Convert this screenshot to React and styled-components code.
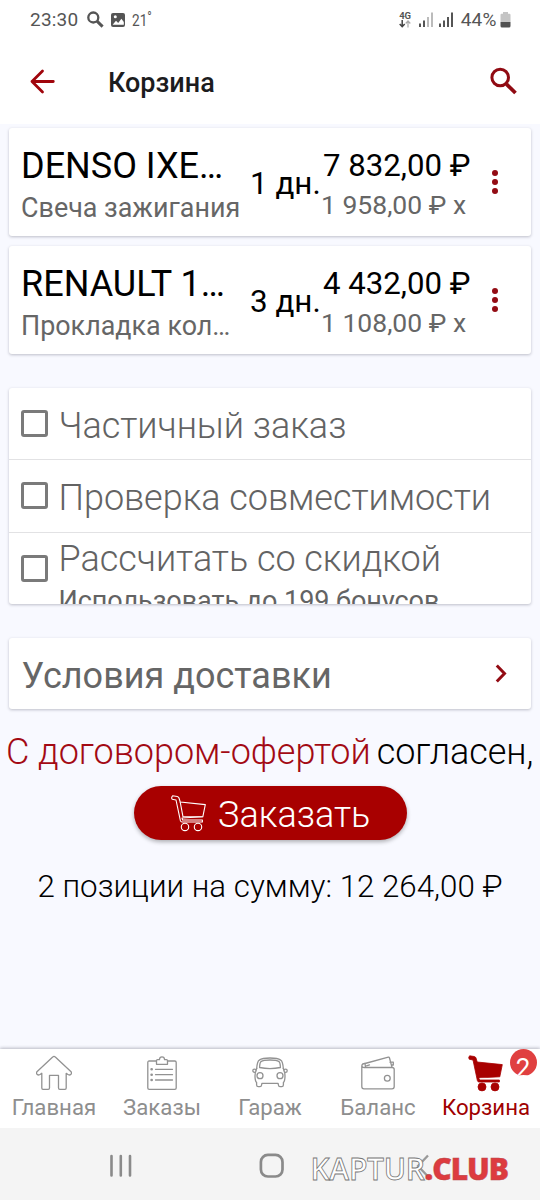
import React from 'react';
import styled, { createGlobalStyle } from 'styled-components';

const GlobalStyle = createGlobalStyle`
  * {
    box-sizing: border-box;
  }

  body {
    margin: 0;
    background: #f8f9ff;
    font-family: Roboto, 'Liberation Sans', sans-serif;
  }

  svg {
    display: block;
    flex-shrink: 0;
  }
`;

const Screen = styled.div`
  display: flex;
  flex-direction: column;
  width: 540px;
  height: 1200px;
  overflow: hidden;
  white-space: nowrap;
`;

const StatusBar = styled.div`
  display: flex;
  justify-content: space-between;
  align-items: center;
  height: 39px;
  padding: 0 29.5px 0 30px;
  background: #fff;
  color: #555;
  font-size: 19px;
`;

const StatusGroup = styled.div`
  display: flex;
  align-items: center;
`;

const Clock = styled.span`
  width: 56.5px;
  letter-spacing: 0.2px;
`;

const Temperature = styled.span`
  width: 20px;
  margin-left: 6px;
  font-size: 17px;
  transform: scaleX(0.8);
  transform-origin: left;
`;

const Degree = styled.sup`
  font-size: 15px;
  line-height: 0;
  vertical-align: 4px;
`;

const Network = styled.div`
  display: flex;
  flex-direction: column;
  align-items: center;
  width: 13px;
  margin-right: 7px;
  font-size: 9.5px;
  font-weight: 700;
  line-height: 9px;
`;

const BatteryLevel = styled.span`
  margin: 0 3px 0 7px;
  letter-spacing: 0.2px;
`;

const Header = styled.header`
  display: flex;
  align-items: center;
  height: 85px;
  padding: 0 22px 0 30px;
  background: #fff;
`;

const Title = styled.h1`
  flex: 1;
  margin: 0 0 0 53px;
  padding-top: 3px;
  color: #1c1c1e;
  font-size: 27px;
  font-weight: 500;
`;

const Content = styled.main`
  display: flex;
  flex: 1;
  flex-direction: column;
  padding: 4px 9px 0;
`;

const Card = styled.section`
  background: #fff;
  border-radius: 3px;
  box-shadow: 0 1px 3px rgba(40, 40, 60, 0.28);
`;

const CartItem = styled(Card)`
  display: flex;
  align-items: flex-start;
  height: 108px;
  margin-bottom: 10px;
  padding: 17px 0 0 12px;
`;

const ItemInfo = styled.div`
  width: 228px;
`;

const ItemName = styled.div`
  color: #000;
  font-size: 36px;
  line-height: 42px;
`;

const ItemNote = styled.div`
  color: #666;
  font-size: 26.9px;
  line-height: 43px;
`;

const ItemDays = styled.div`
  width: 72px;
  padding-left: 1px;
  font-size: 31.4px;
  line-height: 77px;
`;

const ItemPrice = styled.div`
  width: 165px;
`;

const Total = styled.div`
  padding-left: 2px;
  font-size: 31.2px;
  line-height: 41px;
`;

const UnitPrice = styled.div`
  color: #666;
  font-size: 26.5px;
  line-height: 38px;
`;

const MenuButton = styled.button`
  margin: 25px 0 0;
  padding: 0;
  border: none;
  background: none;
`;

const Options = styled(Card)`
  height: 216px;
  margin-top: 24px;
  overflow: hidden;
`;

const Option = styled.label`
  display: flex;
  align-items: center;
  height: ${(p) => p.$height}px;
  padding-left: 12px;

  & + & {
    border-top: 1px solid #e2e2e4;
  }
`;

const Checkbox = styled.span`
  width: 27px;
  height: 27px;
  margin-bottom: 1px;
  border: 3px solid #7a7a7a;
  border-radius: 3px;
`;

const OptionText = styled.div`
  align-self: ${(p) => (p.$top ? 'flex-start' : 'auto')};
  margin-left: 10.5px;
  padding-top: ${(p) => (p.$top ? 5 : 4)}px;
  color: #636363;
  font-size: 36px;
  font-weight: 300;
  letter-spacing: -0.04px;
  line-height: 42px;
`;

const OptionHint = styled.div`
  font-size: 27px;
  font-weight: 400;
`;

const Delivery = styled(Card)`
  display: flex;
  justify-content: space-between;
  align-items: center;
  height: 71px;
  margin-top: 34px;
  padding: 0 23px 0 12.5px;
`;

const DeliveryText = styled.span`
  padding-top: 4px;
  color: #666;
  font-size: 36px;
`;

const Agreement = styled.p`
  display: flex;
  gap: 6px;
  margin: 22px -3px 0;
  font-size: 36px;
  font-weight: 300;
  letter-spacing: -0.04px;
  line-height: 42px;
`;

const OfferLink = styled.a`
  color: #a30a14;
`;

const OrderButton = styled.button`
  display: flex;
  align-self: center;
  width: 273px;
  height: 54px;
  margin-top: 13px;
  padding: 9px 0 0 37px;
  border: none;
  border-radius: 27px;
  background: #a80000;
  box-shadow: 0 2px 4px rgba(0, 0, 0, 0.3);
  color: #fff;
  font-family: inherit;
  font-size: 36px;
  font-weight: 300;
  line-height: 41px;
`;

const OrderText = styled.span`
  margin-left: 11.5px;
`;

const Summary = styled.p`
  margin: 27px 0 0 28.5px;
  font-size: 31.3px;
  font-weight: 300;
  line-height: 40px;
`;

const TabBar = styled.nav`
  display: grid;
  grid-template-columns: repeat(5, 1fr);
  height: 79px;
  background: #fff;
  box-shadow: 0 -1px 3px rgba(40, 40, 60, 0.3);
`;

const Tab = styled.a`
  display: flex;
  position: relative;
  flex-direction: column;
  align-items: center;
  padding-top: 6px;
  color: ${(p) => (p.$active ? '#a00000' : '#8e8e8e')};
  font-size: 22.2px;
  line-height: 30px;
`;

const TabIcon = styled.div`
  height: 37px;
`;

const Badge = styled.span`
  position: absolute;
  top: 0;
  left: 77.5px;
  width: 27px;
  height: 27px;
  overflow: hidden;
  border-radius: 50%;
  background: #e04040;
  color: #fff;
  font-size: 26px;
  line-height: 38px;
  text-align: center;
`;

const SystemBar = styled.div`
  display: flex;
  position: relative;
  align-items: center;
  height: 72px;
  padding: 3px 0 0 110px;
  background: #f4f4f4;
`;

const SystemKey = styled.div`
  width: ${(p) => p.$width}px;
`;

const Watermark = styled.div`
  position: absolute;
  top: 20px;
  left: 310.5px;
  color: #fff;
  font-family: 'Open Sans', sans-serif;
  font-size: 30px;
  font-weight: 600;
  line-height: 42px;
  letter-spacing: -0.3px;
  -webkit-text-stroke: 0.8px #777;
`;

const WatermarkZone = styled.span`
  color: #dd3b40;
  font-weight: 800;
  letter-spacing: -1px;
  -webkit-text-stroke: 0.5px #b84a4e;
`;

const CART_ITEMS = [
  { name: 'DENSO IXE…', note: 'Свеча зажигания', days: '1 дн.', total: '7 832,00 ₽', unit: '1 958,00 ₽ x' },
  { name: 'RENAULT 1…', note: 'Прокладка кол…', days: '3 дн.', total: '4 432,00 ₽', unit: '1 108,00 ₽ x' },
];

const SignalIcon = ({ level }) => (
  <svg width="15" height="16" viewBox="0 0 15 16">
    {[3.5, 6.5, 10, 14.5].map((h, i) => (
      <rect key={h} x={i * 4} y={15 - h} width="2" height={h} fill={i < level ? '#555' : '#bbb'} />
    ))}
  </svg>
);

const CartIcon = ({ filled }) => (
  <svg
    width="36"
    height="37"
    viewBox="0 0 36 37"
    fill={filled ? '#a80000' : 'none'}
    stroke={filled ? '#a80000' : '#fff'}
    strokeWidth={filled ? 0.8 : 1.1}
    strokeLinejoin="round"
  >
    <path d="M1.6.8 6.3 1.5 Q7.6 1.8 8 3 L9.2 7 34.3 9.6 31.8 21.8 11 23 11.6 25 H31.4 V27 H11 Q9.8 27 9.4 25.7 L5 5 1.2 4.2 Q0 2.5 1.6.8Z" />
    {filled && <path d="M11.5 23.4H31" stroke="#fff" strokeWidth="0.9" />}
    {!filled && <path d="M9.2 7 12 21.8H31.8" />}
    <circle cx="14" cy="31.9" r={filled ? 4 : 3.7} />
    <circle cx="27" cy="31.9" r={filled ? 4 : 3.7} />
  </svg>
);

const lineIcon = { fill: 'none', stroke: '#929292', strokeWidth: 1.3, strokeLinejoin: 'round', strokeLinecap: 'round' };

const HomeIcon = () => (
  <svg width="36" height="36" viewBox="0 -1 36 36" {...lineIcon}>
    <path d="M18 .4Q17.3.4 16.7 1L1.2 15.5C-.3 17 .8 19 2.5 19 4 19 4.6 18 5.8 17.3V32Q5.8 33.3 7 33.3H12.2Q13.5 33.3 13.5 32V19.3H22.5V32Q22.5 33.3 23.8 33.3H29Q30.2 33.3 30.2 32V17.3C31.4 18 32 19 33.5 19 35.2 19 36.3 17 34.8 15.5L19.3 1Q18.7.4 18 .4Z" />
  </svg>
);

const OrdersIcon = () => (
  <svg width="30" height="36" viewBox="0 -1 30 36" {...lineIcon}>
    <path d="M9.5 5H2.2Q.8 5 .8 6.4V32Q.8 33.3 2.2 33.3H27.8Q29.2 33.3 29.2 32V6.4Q29.2 5 27.8 5H20.5" />
    <path d="M9.5 8.3V4.5Q9.5 3.6 10.5 3.6H12.4Q12.6.8 15 .8T17.6 3.6H19.5Q20.5 3.6 20.5 4.5V8.3Z" />
    <path d="M8.5 13.3H25.5M8.5 18.7H25.5M8.5 24H25.5" />
    <path d="M4.6 13.3h.1M4.6 18.7h.1M4.6 24h.1" strokeWidth="2.6" />
  </svg>
);

const GarageIcon = () => (
  <svg width="36" height="36" viewBox="0 -2 36 36" {...lineIcon}>
    <path d="M4.7 11.5C5 7 5.7 4 7.3 3.1 10 1.2 14 1 18 1S26 1.2 28.7 3.1C30.3 4 31 7 31.3 11.5" />
    <path d="M7.6 10.5C7.7 7 8.2 5.3 9 4.6 11 3.2 15 3 18 3S25 3.2 27 4.6C27.8 5.3 28.3 7 28.4 10.5Q18 12.6 7.6 10.5Z" />
    <path d="M4.7 11.5C3.2 13.5 3 16 3 19 3 22 3.3 24.3 4.6 25.5V28Q4.7 29.6 6.2 29.6H8Q9.4 29.6 9.6 28L9.9 26.3H26.1L26.4 28Q26.6 29.6 28 29.6H29.8Q31.3 29.6 31.4 28V25.5C32.7 24.3 33 22 33 19 33 16 32.8 13.5 31.3 11.5" />
    <circle cx="8" cy="18.7" r="3" />
    <circle cx="28" cy="18.7" r="3" />
    <circle cx="2.4" cy="13.7" r="1.6" fill="#fff" />
    <circle cx="33.6" cy="13.7" r="1.6" fill="#fff" />
  </svg>
);

const BalanceIcon = () => (
  <svg width="34" height="36" viewBox="0 -1 34 36" {...lineIcon}>
    <path d="M4 7.5Q.8 7.5 .8 10.3V30.5Q.8 32.8 3 32.8H31Q33.2 32.8 33.2 30.5V13.5Q33.2 11.5 31 11.5H3Q1.6 11.5 1 10.3" />
    <path d="M4.5 11 4 7.5 27.3 1.2Q28.2 1 28.5 2L31 11.3M29 6.2H32.3V9H30.6" />
    <path d="M5.5 9.8 8.5 8.9" />
    <circle cx="26.3" cy="22.3" r="2.9" />
  </svg>
);

const TABS = [
  { label: 'Главная', icon: <HomeIcon /> },
  { label: 'Заказы', icon: <OrdersIcon /> },
  { label: 'Гараж', icon: <GarageIcon /> },
  { label: 'Баланс', icon: <BalanceIcon /> },
  { label: 'Корзина', icon: <CartIcon filled />, active: true, badge: 2 },
];

const App = () => (
  <>
    <GlobalStyle />
    <Screen>
      <StatusBar>
        <StatusGroup>
          <Clock>23:30</Clock>
          <svg width="17" height="17" viewBox="0 0 17 17" fill="none" stroke="#555" strokeWidth="2.3">
            <circle cx="6.3" cy="6.5" r="5" />
            <path d="M10 10.2 15.6 15.6" strokeWidth="3" />
          </svg>
          <svg width="22" height="16" viewBox="-7 0 22 16">
            <rect x="0" y="1" width="14" height="14" rx="2" fill="#555" />
            <path d="M1.8 12.6 5 8.8 7.2 11 10.4 6.8 12.8 10V12.8H1.8Z" fill="#fff" />
            <circle cx="4.3" cy="4.7" r="1.5" fill="#fff" />
          </svg>
          <Temperature>
            21<Degree>°</Degree>
          </Temperature>
        </StatusGroup>
        <StatusGroup>
          <Network>
            4G
            <svg width="12" height="8" viewBox="0 0 12 8" fill="none" strokeWidth="1.5">
              <path d="M3.2 0V6.6M.7 4 3.2 6.7 5.7 4" stroke="#444" />
              <path d="M9 7.5V1M6.7 3.5 9 1 11.3 3.5" stroke="#aaa" strokeWidth="1.2" />
            </svg>
          </Network>
          <SignalIcon level={2} />
          <svg width="5" height="1" />
          <SignalIcon level={4} />
          <BatteryLevel>44%</BatteryLevel>
          <svg width="11" height="16" viewBox="0 0 11 16">
            <path d="M3 0H8V1.8H9.5Q10.5 1.8 10.5 3V10H.5V3Q.5 1.8 1.5 1.8H3Z" fill="#c4c4c4" />
            <path d="M.5 10H10.5V14Q10.5 15.5 9 15.5H2Q.5 15.5.5 14Z" fill="#505050" />
          </svg>
        </StatusGroup>
      </StatusBar>

      <Header>
        <svg width="25" height="26" viewBox="0 0 25 26" fill="none" stroke="#a0050c" strokeWidth="2.8" strokeLinecap="round" strokeLinejoin="round">
          <path d="M23.3 12.5H2M12.5 2 2 12.5 12.5 23" />
        </svg>
        <Title>Корзина</Title>
        <svg width="28" height="30" viewBox="0 0 28 30" fill="none" stroke="#900a12">
          <circle cx="10.2" cy="10.5" r="8.3" strokeWidth="3" />
          <path d="M16.5 17.2 25.5 26" strokeWidth="3.8" />
        </svg>
      </Header>

      <Content>
        {CART_ITEMS.map((item) => (
          <CartItem key={item.name}>
            <ItemInfo>
              <ItemName>{item.name}</ItemName>
              <ItemNote>{item.note}</ItemNote>
            </ItemInfo>
            <ItemDays>{item.days}</ItemDays>
            <ItemPrice>
              <Total>{item.total}</Total>
              <UnitPrice>{item.unit}</UnitPrice>
            </ItemPrice>
            <MenuButton>
              <svg width="18" height="24" viewBox="0 0 18 24" fill="#930c14">
                <circle cx="9" cy="3" r="3" />
                <circle cx="9" cy="12" r="3" />
                <circle cx="9" cy="21" r="3" />
              </svg>
            </MenuButton>
          </CartItem>
        ))}

        <Options>
          <Option $height={71}>
            <Checkbox />
            <OptionText>Частичный заказ</OptionText>
          </Option>
          <Option $height={73}>
            <Checkbox />
            <OptionText>Проверка совместимости</OptionText>
          </Option>
          <Option $height={72}>
            <Checkbox />
            <OptionText $top>
              Рассчитать со скидкой
              <OptionHint>Использовать до 199 бонусов</OptionHint>
            </OptionText>
          </Option>
        </Options>

        <Delivery>
          <DeliveryText>Условия доставки</DeliveryText>
          <svg width="14" height="20" viewBox="0 0.5 14 20" fill="none" stroke="#930c14" strokeWidth="3">
            <path d="M2.8 2 10.5 10 2.8 18" />
          </svg>
        </Delivery>

        <Agreement>
          <OfferLink>С договором-офертой</OfferLink>
          <span>согласен,</span>
        </Agreement>
        <OrderButton>
          <CartIcon />
          <OrderText>Заказать</OrderText>
        </OrderButton>
        <Summary>2 позиции на сумму: 12 264,00 ₽</Summary>
      </Content>

      <TabBar>
        {TABS.map((tab) => (
          <Tab key={tab.label} $active={tab.active}>
            <TabIcon>{tab.icon}</TabIcon>
            {tab.label}
            {tab.badge && <Badge>{tab.badge}</Badge>}
          </Tab>
        ))}
      </TabBar>

      <SystemBar>
        <SystemKey $width={149}>
          <svg width="22" height="24" viewBox="0 0 22 24" stroke="#8a8a8a" strokeWidth="2.6" strokeLinecap="round">
            <path d="M1.5 2V21.5M10.8 2V21.5M20 2V21.5" />
          </svg>
        </SystemKey>
        <SystemKey $width={157}>
          <svg width="26" height="26" viewBox="0 0 26 26" fill="none" stroke="#8a8a8a" strokeWidth="2.7">
            <rect x="1.9" y="1.9" width="21.6" height="21.6" rx="7" />
          </svg>
        </SystemKey>
        <SystemKey $width={14}>
          <svg width="14" height="24" viewBox="0 0 14 24" fill="none" stroke="#999" strokeWidth="2.3">
            <path d="M12 1.5 2 12 12 22.5" />
          </svg>
        </SystemKey>
        <Watermark>
          KAPTUR<WatermarkZone>.CLUB</WatermarkZone>
        </Watermark>
      </SystemBar>
    </Screen>
  </>
);

export default App;
